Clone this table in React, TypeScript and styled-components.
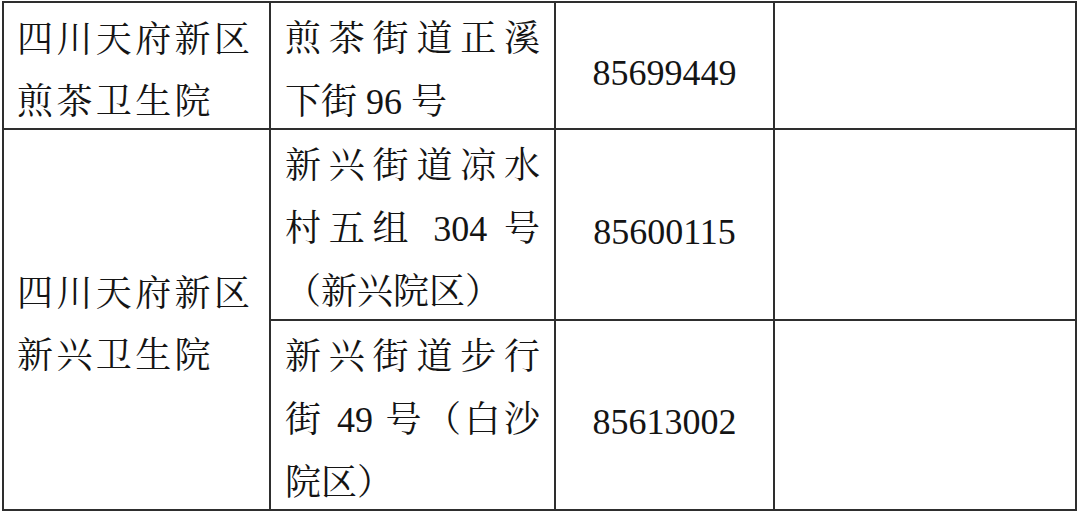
import React from "react";
import styled, { createGlobalStyle } from "styled-components";

const Global = createGlobalStyle`
  html, body { margin: 0; padding: 0; background: #ffffff; }
  body { width: 1080px; height: 514px; overflow: hidden; }
`;

const Sheet = styled.div`
  display: grid;
  grid-template-columns: 265px 283px 217px 300px;
  grid-template-rows: 125px 189px 188px;
  gap: 2px;
  padding: 2px;
  margin: 1px 0 0 2px;
  width: max-content;
  background: #2e2e2e;
  font-family: "Liberation Serif", "Noto Serif CJK SC", serif;
  color: #141414;
`;

const Cell = styled.div<{ $rowSpan?: number }>`
  background: #ffffff;
  display: flex;
  flex-direction: column;
  justify-content: center;
  padding: 10px 0 0 0;
  box-sizing: border-box;
  grid-row: ${(p) => (p.$rowSpan ? `span ${p.$rowSpan}` : "auto")};
`;

const NameCell = styled(Cell)`
  padding-left: 13px;
  font-size: 36px;
  letter-spacing: 3.4px;
  line-height: 62px;
`;

const AddressCell = styled(Cell)`
  padding-left: 14px;
  padding-right: 14px;
  font-size: 36px;
  line-height: 63px;
`;

const Line = styled.div<{ $spread?: boolean }>`
  white-space: nowrap;
  text-align: left;
  text-align-last: ${(p) => (p.$spread ? "justify" : "left")};
  text-justify: inter-character;
`;

const Num = styled.span`
  font-family: "Liberation Serif", serif;
  letter-spacing: 0;
`;

const PhoneCell = styled(Cell)`
  align-items: center;
  padding-top: 14px;
  font-size: 36px;
  line-height: 40px;
`;

type Row = {
  phone: string;
  address: { parts: string[]; spread?: boolean }[];
};

const groups: { name: string[]; rows: Row[] }[] = [
  {
    name: ["四川天府新区", "煎茶卫生院"],
    rows: [
      {
        phone: "85699449",
        address: [
          { parts: ["煎茶街道正溪"], spread: true },
          { parts: ["下街 ", "96", " 号"] },
        ],
      },
    ],
  },
  {
    name: ["四川天府新区", "新兴卫生院"],
    rows: [
      {
        phone: "85600115",
        address: [
          { parts: ["新兴街道凉水"], spread: true },
          { parts: ["村五组 ", "304", " 号"], spread: true },
          { parts: ["（新兴院区）"] },
        ],
      },
      {
        phone: "85613002",
        address: [
          { parts: ["新兴街道步行"], spread: true },
          { parts: ["街 ", "49", " 号（白沙"], spread: true },
          { parts: ["院区）"] },
        ],
      },
    ],
  },
];

const isNum = (s: string) => /^\d+$/.test(s);

export default function App() {
  return (
    <>
      <Global />
      <Sheet>
        {groups.map((g, gi) =>
          g.rows.map((r, ri) => (
            <React.Fragment key={`${gi}-${ri}`}>
              {ri === 0 && (
                <NameCell $rowSpan={g.rows.length}>
                  {g.name.map((n) => (
                    <Line key={n}>{n}</Line>
                  ))}
                </NameCell>
              )}
              <AddressCell>
                {r.address.map((a, ai) => (
                  <Line key={ai} $spread={a.spread}>
                    {a.parts.map((p, pi) =>
                      isNum(p) ? <Num key={pi}>{p}</Num> : <React.Fragment key={pi}>{p}</React.Fragment>
                    )}
                  </Line>
                ))}
              </AddressCell>
              <PhoneCell>
                <Num>{r.phone}</Num>
              </PhoneCell>
              <Cell />
            </React.Fragment>
          ))
        )}
      </Sheet>
    </>
  );
}
